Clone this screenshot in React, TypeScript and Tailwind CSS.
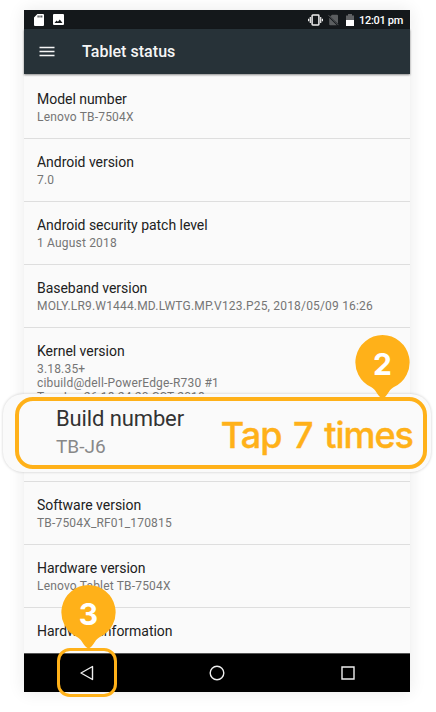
const rows = [
  { title: 'Model number', lines: ['Lenovo TB-7504X'], box: 'h-[65px] pt-4' },
  { title: 'Android version', lines: ['7.0'], box: 'h-[63px] pt-[14px]' },
  { title: 'Android security patch level', lines: ['1 August 2018'], box: 'h-[63px] pt-[14px]' },
  { title: 'Baseband version', lines: ['MOLY.LR9.W1444.MD.LWTG.MP.V123.P25, 2018/05/09 16:26'], box: 'h-[63px] pt-[14px]' },
  { title: 'Kernel version', lines: ['3.18.35+', 'cibuild@dell-PowerEdge-R730 #1', 'Tue Jun 26 18:24:20 CST 2018'], box: 'h-[154px] pt-[14px]' },
  { title: 'Software version', lines: ['TB-7504X_RF01_170815'], box: 'h-[63px] pt-[14px]' },
  { title: 'Hardware version', lines: ['Lenovo Tablet TB-7504X'], box: 'h-[63px] pt-[14px]' },
  { title: 'Hardware information', lines: [], box: 'h-[45px] pt-[14px] border-b-0' },
];

function StatusBar() {
  return (
    <div className="flex h-[19px] items-center bg-[#14181b] pl-[10px] pr-[6px] text-white">
      <svg width="10" height="12" viewBox="0 0 10 12" fill="currentColor">
        <path fillRule="evenodd" d="M3.400 0H9a1 1 0 0 1 1 1v10a1 1 0 0 1-1 1H1a1 1 0 0 1-1-1V3.400zM3.600 1.500v2h1v-2zm1.900 0v2h1v-2zm1.800 0v2h1v-2z" />
      </svg>
      <svg className="ml-[9px]" width="11" height="11" viewBox="0 0 11 11" fill="currentColor">
        <path fillRule="evenodd" d="M1 0h9a1 1 0 0 1 1 1v9a1 1 0 0 1-1 1H1a1 1 0 0 1-1-1V1a1 1 0 0 1 1-1zM1.500 9h8L6.800 5.500 4.900 7.800 3.600 6.400z" />
      </svg>
      <svg className="ml-auto mt-px" width="15" height="12" viewBox="0 0 15 12" fill="none" stroke="#eee">
        <rect x="4.100" y="1" width="6.800" height="10" rx=".7" strokeWidth="1.500" />
        <path d="M2.300 3v6M12.700 3v6M.6 4.700v2.600M14.400 4.700v2.600" strokeWidth="1.200" />
      </svg>
      <svg className="ml-[5px]" width="11" height="12" viewBox="0 0 11 12">
        <path d="M4 .8h5a1 1 0 0 1 1 1v8L2.200 2.600zM1.200 3.800l7.600 7.400H2.200a1 1 0 0 1-1-1z" fill="#5b5e60" />
        <path d="M.5 1.200l10 10" stroke="#5b5e60" strokeWidth=".9" />
      </svg>
      <svg className="ml-[7px]" width="8" height="12" viewBox="0 0 8 12">
        <path d="M0 1.500h2V0h4v1.500h2V6H0z" fill="#5f6163" />
        <path d="M0 6h8v6H0z" fill="#fff" />
      </svg>
      <span className="ml-[5px] w-[45px] whitespace-nowrap pt-px text-[11px] font-medium leading-none tracking-[-0.3px]">12:01 pm</span>
    </div>
  );
}

function Pin({ label }: { label: string }) {
  return (
    <div className="relative h-[64px] w-[55px]">
      <svg className="absolute inset-0" width="55" height="64" viewBox="0 0 55 64" fill="#ffb119">
        <path d="M27.500 0a27.300 27.300 0 0 1 11 52.200C34.500 54.500 33.500 58 30.500 61.500Q27.500 65 24.500 61.500C21.500 58 20.500 54.500 16.500 52.200A27.300 27.300 0 0 1 27.500 0z" />
      </svg>
      <span className="absolute inset-x-0 top-[12px] text-center font-['Inter'] text-[30px] font-bold leading-[34px] text-white">{label}</span>
    </div>
  );
}

export default function App() {
  return (
    <div className="relative h-[712px] w-[436px] overflow-hidden bg-white pl-6 pt-[10px] font-['Roboto',sans-serif]">
      <div className="flex h-[682px] w-[386px] flex-col bg-[#fafafa] shadow-[0_0_16px_rgba(0,0,0,0.09)]">
        <StatusBar />
        <header className="relative flex h-[45px] shrink-0 items-center bg-[#273238] pl-[15px] text-[#f5f5f5] shadow-[0_1px_2px_rgba(0,0,0,0.45)]">
          <svg width="16" height="11" viewBox="0 0 16 11" stroke="currentColor" strokeWidth="1.700">
            <path d="M.5 1.500h15M.5 5.500h15M.5 9.500h15" />
          </svg>
          <h1 className="ml-[27px] pt-px text-[16px] font-medium tracking-[0.03px]">Tablet status</h1>
        </header>
        {rows.map((row) => (
          <section key={row.title} className={`shrink-0 border-b border-[#dedede] pl-[13px] ${row.box}`}>
            <h2 className="text-[14px] leading-[18px] tracking-[-0.03px] text-[#212121]">{row.title}</h2>
            <div className="pt-[2px]">
              {row.lines.map((line) => (
                <p key={line} className="whitespace-nowrap text-[12px] leading-[14px] tracking-[0.18px] text-[#757575]">{line}</p>
              ))}
            </div>
          </section>
        ))}
        <nav className="flex h-[39px] shrink-0 items-center border-t border-[#555] bg-black pl-[56px]">
          <svg width="14" height="16" viewBox="0 0 14 16" fill="none" stroke="#eee" strokeWidth="1.400" strokeLinejoin="round">
            <path d="M12.500 1.500v13L1 8z" />
          </svg>
          <svg className="ml-[115px]" width="16" height="16" viewBox="0 0 16 16" fill="none" stroke="#eee" strokeWidth="1.400">
            <circle cx="8" cy="8" r="6.800" />
          </svg>
          <svg className="ml-[116px]" width="14" height="14" viewBox="0 0 14 14" fill="none" stroke="#eee" strokeWidth="1.400">
            <path d="M1 1h12v12H1z" />
          </svg>
        </nav>
      </div>

      <div className="absolute left-[3px] top-[394px] h-[78px] w-[428px] rounded-[20px] bg-[#fafafa] p-[3px_4px_3px_12px] shadow-[0_0_3px_rgba(0,0,0,0.2)]">
        <div className="flex h-[72px] justify-between rounded-[18px] border-4 border-[#ffb119] pl-[37px] pr-[10px]">
          <div className="pt-[4px]">
            <p className="whitespace-nowrap text-[22px] leading-[28px] tracking-[-0.12px] text-[#333]">Build number</p>
            <p className="text-[19px] leading-[28px] text-[#888]">TB-J6</p>
          </div>
          <p className="whitespace-nowrap pt-[14px] font-['Inter'] text-[36px] font-medium leading-[40px] tracking-[-1px] text-[#ffb119] [-webkit-text-stroke:0.4px_#ffb119] [word-spacing:3px]">Tap 7 times</p>
        </div>
      </div>

      <div className="absolute left-[355px] top-[335px]"><Pin label="2" /></div>
      <div className="absolute left-[57px] top-[648px] h-[49px] w-[60px] rounded-[13px] border-[3px] border-[#ffb119]" />
      <div className="absolute left-[61px] top-[585px]"><Pin label="3" /></div>
    </div>
  );
}
